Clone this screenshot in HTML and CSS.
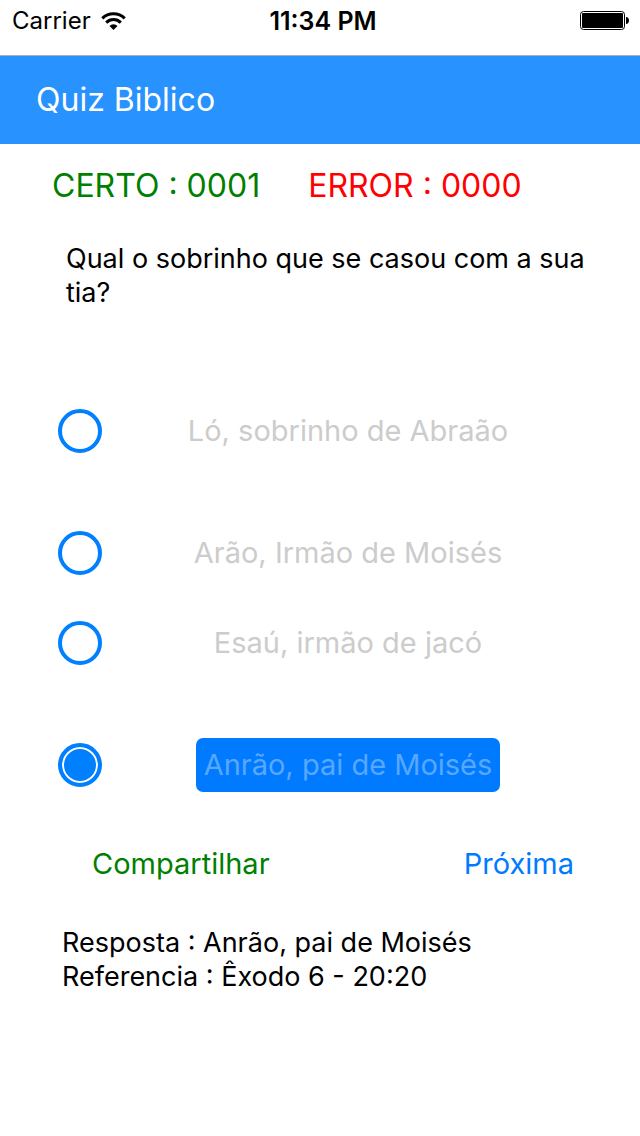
FILE: index.html
```html
<!DOCTYPE html>
<html lang="pt-BR">
  <head>
    <meta charset="utf-8" />
    <meta name="viewport" content="width=device-width, initial-scale=1" />
    <title>Quiz Biblico</title>
    <link rel="stylesheet" href="styles.css" />
  </head>

  <body>
    <div class="statusbar">
      <div class="carrier">
        <span>Carrier</span>
        <svg class="wifi" viewBox="0 0 25 18" aria-hidden="true">
          <path d="M1.3 6.4a16 16 0 0 1 22.4 0" />
          <path d="M5.2 10.6a10.4 10.4 0 0 1 14.6 0" />
          <path class="wifi-dot" d="M12.5 18l-4-4a5.7 5.7 0 0 1 8 0z" />
        </svg>
      </div>
      <div class="clock">11:34 PM</div>
      <svg class="battery" viewBox="0 0 50 19" aria-hidden="true">
        <rect class="battery-case" x="0.5" y="0.5" width="44" height="18" rx="3" />
        <rect x="2" y="2" width="41" height="15" rx="1" />
        <path d="M46 6c4 0 4 7 0 7z" />
      </svg>
    </div>

    <header class="navbar">
      <h1>Quiz Biblico</h1>
    </header>

    <main class="quiz">
      <div class="score">
        <div class="right"><span>CERTO :</span> <span>0001</span></div>
        <div class="wrong"><span>ERROR :</span> <span>0000</span></div>
      </div>

      <p class="question" id="question">Qual o sobrinho que se casou com a sua tia?</p>

      <form class="answers" role="radiogroup" aria-labelledby="question">
        <div class="answer">
          <input type="radio" name="answer" id="a1" disabled />
          <label for="a1"><span>Ló, sobrinho de Abraão</span></label>
        </div>
        <div class="answer">
          <input type="radio" name="answer" id="a2" disabled />
          <label for="a2"><span>Arão, Irmão de Moisés</span></label>
        </div>
        <div class="answer">
          <input type="radio" name="answer" id="a3" disabled />
          <label for="a3"><span>Esaú, irmão de jacó</span></label>
        </div>
        <div class="answer">
          <input type="radio" name="answer" id="a4" checked disabled />
          <label for="a4"><span>Anrão, pai de Moisés</span></label>
        </div>
      </form>

      <div class="actions">
        <button class="share" type="button">Compartilhar</button>
        <button class="next" type="button">Próxima</button>
      </div>

      <p class="result">
        Resposta : Anrão, pai de Moisés<br />
        Referencia : Êxodo 6 - 20:20
      </p>
    </main>
  </body>
</html>
```

FILE: styles.css
```css
* {
  box-sizing: border-box;
}

body {
  margin: 0;
  background-color: #fff;
  color: #000;
  font-family: 'Inter', 'Liberation Sans', sans-serif;
  font-size: 27px;
  line-height: 34px;
}

h1,
p {
  margin: 0;
  font-weight: normal;
}

.statusbar {
  display: grid;
  grid-template-columns: 1fr auto 1fr;
  align-items: center;
  height: 41px;
  padding: 0 10px 0 12px;
  font-size: 24px;
}

.carrier {
  display: flex;
  align-items: center;
  gap: 10px;
}

.wifi {
  width: 25px;
  height: 18px;
  fill: none;
  stroke: #000;
  stroke-width: 3;
}

.wifi-dot {
  fill: #000;
  stroke: none;
}

.clock {
  padding-left: 4px;
  font-size: 25px;
  font-weight: 600;
}

.battery {
  width: 50px;
  height: 19px;
  justify-self: end;
}

.battery-case {
  fill: none;
  stroke: #000;
}

.navbar {
  margin-top: 14px;
  padding: 24px 36px;
  background-color: #2892ff;
  border-top: 1px solid #a9b0b7;
}

.navbar h1 {
  color: #fff;
  font-size: 32px;
  line-height: 40px;
}

.quiz {
  padding: 22px 40px 24px;
}

.score {
  display: flex;
  gap: 48px;
  padding-left: 12px;
  font-size: 32px;
  line-height: 40px;
}

.score .right {
  color: #008000;
}

.score .wrong {
  color: #f00;
}

.question {
  margin-top: 36px;
  padding-left: 26px;
}

.answers {
  margin-top: 94px;
}

.answer {
  display: flex;
  align-items: center;
  height: 54px;
  margin-bottom: 68px;
  padding-left: 18px;
}

.answer:nth-child(2) {
  margin-bottom: 36px;
}

.answer:last-child {
  margin-bottom: 55px;
}

.answer input {
  flex: none;
  appearance: none;
  width: 44px;
  height: 44px;
  margin: 0;
  border: 4px solid #007fff;
  border-radius: 50%;
}

.answer input:checked {
  background-color: #007fff;
  box-shadow: inset 0 0 0 2px #fff;
}

.answer label {
  flex: 1;
  padding-right: 6px;
  color: #ccc;
  font-size: 29px;
  text-align: center;
}

.answer span {
  display: inline-block;
  padding: 10px 8px;
  border-radius: 7px;
}

.answer input:checked + label span {
  background-color: #007aff;
  color: #59a8ff;
}

.actions {
  display: flex;
  justify-content: space-between;
  padding: 0 26px 0 52px;
}

.actions button {
  padding: 0;
  border: 0;
  background: none;
  font: inherit;
  font-size: 29px;
  cursor: pointer;
}

.share {
  color: #008000;
}

.next {
  color: #007aff;
}

.result {
  margin-top: 45px;
  padding-left: 22px;
}
```
